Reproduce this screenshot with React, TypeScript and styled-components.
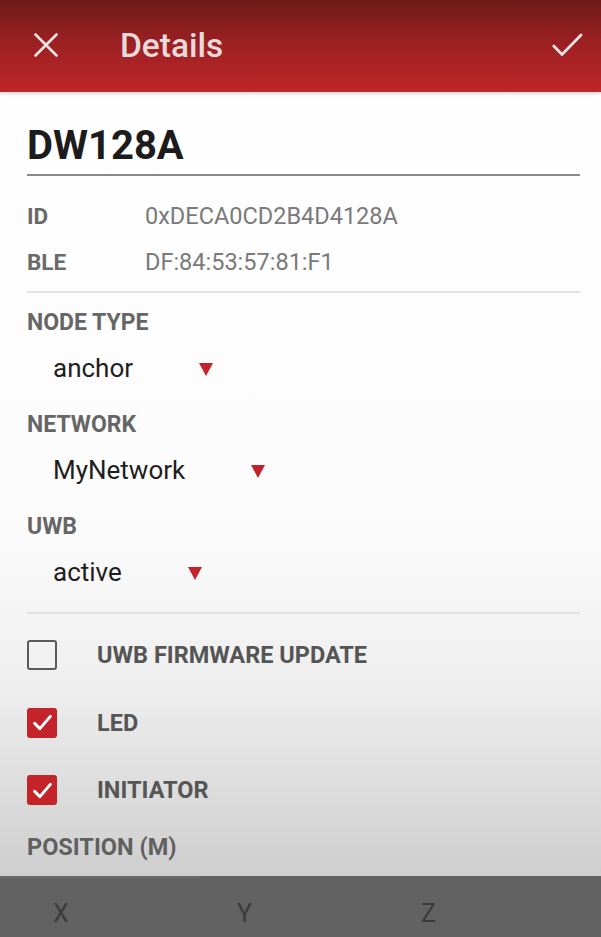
import React from "react";
import styled, { createGlobalStyle } from "styled-components";

const Global = createGlobalStyle`
  html, body { margin: 0; padding: 0; }
  body { font-family: Roboto, "Liberation Sans", sans-serif; background: #fff; }
  * { box-sizing: border-box; }
`;

const Screen = styled.div`
  width: 601px;
  height: 937px;
  display: flex;
  flex-direction: column;
  overflow: hidden;
  background: linear-gradient(to bottom, #ffffff 0px, #fcfcfc 520px, #efefef 680px, #cecece 876px);
`;

const AppBar = styled.header`
  height: 92px;
  flex-shrink: 0;
  display: flex;
  align-items: center;
  padding: 0 18px 0 34px;
  background: linear-gradient(to bottom, #6f1a1a 0%, #9a2022 45%, #c02628 100%);
  box-shadow: 0 2px 3px rgba(0,0,0,0.15);
`;

const IconButton = styled.div`
  display: flex;
  align-items: center;
  justify-content: center;
  margin-top: -2px;
`;

const BarTitle = styled.h1`
  margin: 0 0 0 62px;
  flex: 1;
  font-size: 33.5px;
  font-weight: 500;
  color: #e7dada;
  line-height: 40px;
`;

const Content = styled.main`
  flex: 1;
  display: flex;
  flex-direction: column;
  padding: 0 21px 0 27px;
`;

const NameField = styled.div`
  margin-top: 30px;
  padding-bottom: 4px;
  border-bottom: 2px solid #8a8a8a;
  font-size: 40px;
  font-weight: 700;
  color: #1c1c1c;
  line-height: 48px;
`;

const InfoGrid = styled.div`
  display: grid;
  grid-template-columns: 118px 1fr;
  row-gap: 18px;
  padding: 26px 0 15px;
  border-bottom: 2px solid #e3e3e3;
`;

const InfoLabel = styled.span`
  font-size: 22.5px;
  font-weight: 700;
  color: #6a6a6a;
  line-height: 28px;
`;

const InfoValue = styled.span`
  font-size: 23.5px;
  color: #7a7a7a;
  line-height: 28px;
`;

const SelectSection = styled.div`
  display: flex;
  flex-direction: column;
  padding: 16px 0 17px;
  border-bottom: 2px solid #e1e1e1;
`;

const FieldLabel = styled.div`
  font-size: 23px;
  font-weight: 700;
  color: #666;
  line-height: 28px;
`;

const SelectRow = styled.div`
  display: flex;
  align-items: center;
  gap: 66px;
  padding-left: 26px;
  height: 46px;
  margin: 8px 0 20px;
  &:last-child { margin-bottom: 0; }
  font-size: 26px;
  color: #1e1e1e;
`;

const Caret = styled.span`
  width: 0;
  height: 0;
  margin-top: 2px;
  border-left: 7px solid transparent;
  border-right: 7px solid transparent;
  border-top: 13px solid #c4222a;
`;

const CheckList = styled.div`
  display: flex;
  flex-direction: column;
  gap: 37.5px;
  padding-top: 26px;
`;

const CheckRow = styled.label`
  display: flex;
  align-items: center;
  gap: 40px;
  height: 30px;
  font-size: 23.5px;
  font-weight: 700;
  color: #555;
`;

const Box = styled.span<{ $checked: boolean }>`
  width: 30px;
  height: 30px;
  flex-shrink: 0;
  border-radius: 3px;
  display: flex;
  align-items: center;
  justify-content: center;
  border: ${(p) => (p.$checked ? "none" : "2.5px solid #5a5a5a")};
  background: ${(p) => (p.$checked ? "#c4232a" : "transparent")};
`;

const SectionTitle = styled.div`
  margin-top: 28px;
  font-size: 23.5px;
  font-weight: 700;
  color: #606060;
  line-height: 28px;
`;

const BottomBar = styled.footer`
  height: 61px;
  flex-shrink: 0;
  display: grid;
  grid-template-columns: repeat(3, 184px) 1fr;
  align-items: center;
  background: #626262;
  position: relative;
`;

const TabIndicator = styled.div`
  position: absolute;
  left: 0;
  top: 0;
  width: 200px;
  height: 2px;
  background: #6c6c6c;
`;

const AxisLabel = styled.span`
  padding-left: 53px;
  font-size: 25px;
  color: #3c3c3c;
  padding-top: 14px;
`;

const CloseIcon = () => (
  <svg width="24" height="24" viewBox="0 0 24 24" fill="none" stroke="#ece3e3" strokeWidth="2.6" strokeLinecap="round">
    <path d="M1.5 1.5 L22.5 22.5 M22.5 1.5 L1.5 22.5" />
  </svg>
);

const DoneIcon = () => (
  <svg width="31" height="24" viewBox="0 0 31 24" fill="none" stroke="#ece3e3" strokeWidth="2.8" strokeLinecap="round" strokeLinejoin="round">
    <path d="M1.8 13 L10 21.5 L29 2" />
  </svg>
);

const TickIcon = () => (
  <svg width="21" height="21" viewBox="0 0 24 24" fill="none" stroke="#ffffff" strokeWidth="3.4" strokeLinecap="round" strokeLinejoin="round">
    <path d="M3 13 L9 19 L21 5" />
  </svg>
);

const selects = [
  { label: "NODE TYPE", value: "anchor" },
  { label: "NETWORK", value: "MyNetwork" },
  { label: "UWB", value: "active" },
];

const checks = [
  { label: "UWB FIRMWARE UPDATE", checked: false },
  { label: "LED", checked: true },
  { label: "INITIATOR", checked: true },
];

export default function App() {
  return (
    <>
      <Global />
      <Screen>
        <AppBar>
          <IconButton>
            <CloseIcon />
          </IconButton>
          <BarTitle>Details</BarTitle>
          <IconButton>
            <DoneIcon />
          </IconButton>
        </AppBar>
        <Content>
          <NameField>DW128A</NameField>
          <InfoGrid>
            <InfoLabel>ID</InfoLabel>
            <InfoValue>0xDECA0CD2B4D4128A</InfoValue>
            <InfoLabel>BLE</InfoLabel>
            <InfoValue>DF:84:53:57:81:F1</InfoValue>
          </InfoGrid>
          <SelectSection>
            {selects.map((s) => (
              <React.Fragment key={s.label}>
                <FieldLabel>{s.label}</FieldLabel>
                <SelectRow>
                  <span>{s.value}</span>
                  <Caret />
                </SelectRow>
              </React.Fragment>
            ))}
          </SelectSection>
          <CheckList>
            {checks.map((c) => (
              <CheckRow key={c.label}>
                <Box $checked={c.checked}>{c.checked && <TickIcon />}</Box>
                {c.label}
              </CheckRow>
            ))}
          </CheckList>
          <SectionTitle>POSITION (M)</SectionTitle>
        </Content>
        <BottomBar>
          <TabIndicator />
          <AxisLabel>X</AxisLabel>
          <AxisLabel>Y</AxisLabel>
          <AxisLabel>Z</AxisLabel>
        </BottomBar>
      </Screen>
    </>
  );
}
